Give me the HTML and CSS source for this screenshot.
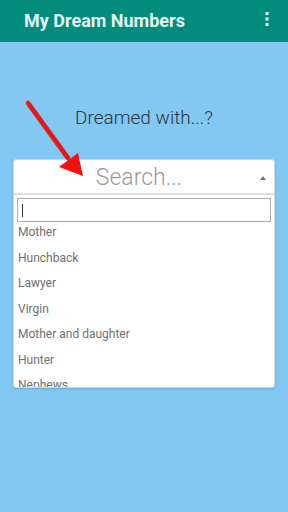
FILE: index.html
```html
<!DOCTYPE html>
<html lang="en">
<head>
<meta charset="UTF-8">
<meta name="viewport" content="width=device-width, initial-scale=1.0">
<title>My Dream Numbers</title>
<link rel="stylesheet" href="styles.css">
</head>
<body>
  <header class="app-bar">
    <span class="app-title">My Dream Numbers</span>
    <svg class="menu-icon" width="4" height="14" viewBox="0 0 4 14">
      <rect x="0.5" y="0" width="3" height="3" fill="#e6f7f4"/>
      <rect x="0.5" y="5.5" width="3" height="3" fill="#e6f7f4"/>
      <rect x="0.5" y="11" width="3" height="3" fill="#e6f7f4"/>
    </svg>
  </header>

  <main class="content">
    <h2 class="question">Dreamed with...?</h2>

    <div class="select">
      <div class="select-head">
        <span class="placeholder">Search...</span>
        <span class="caret"></span>
      </div>
      <div class="dropdown">
        <div class="search-box"><span class="cursor"></span></div>
        <ul class="options">
          <li>Mother</li>
          <li>Hunchback</li>
          <li>Lawyer</li>
          <li>Virgin</li>
          <li>Mother and daughter</li>
          <li>Hunter</li>
          <li>Nephews</li>
        </ul>
      </div>
    </div>
  </main>

  <!-- freccia rossa sopra il contenuto -->
  <svg class="arrow" width="100" height="100" viewBox="0 0 100 100">
    <g transform="translate(1,1.5)" opacity="0.25">
      <line x1="28" y1="103" x2="68" y2="158" stroke="#000" stroke-width="5" transform="translate(0,-95)"/>
    </g>
    <g transform="translate(0,-95)">
      <line x1="28" y1="103" x2="68" y2="158" stroke="#f21010" stroke-width="4.5" stroke-linecap="round"/>
      <polygon points="83,176 59,167 78,153" fill="#f21010"/>
    </g>
  </svg>
</body>
</html>
```

FILE: styles.css
```css
body {
  margin: 0;
  padding: 0;
  width: 288px;
  height: 512px;
  background-color: #82c8f3;
  font-family: Roboto, "Liberation Sans", sans-serif;
  position: relative;
  overflow: hidden;
}

.app-bar {
  height: 42px;
  background-color: #018c7e;
  display: flex;
  align-items: center;
  justify-content: space-between;
  padding: 0 19px 0 24px;
}

.app-title {
  color: #e3f7f3;
  font-size: 18px;
  font-weight: bold;
  margin-top: -2px;
}

.menu-icon {
  margin-top: -4px;
}

.content {
  padding: 0 13px;
}

.question {
  margin: 63px 0 0;
  text-align: center;
  font-size: 19px;
  font-weight: 300;
  color: #2b3640;
  line-height: 26px;
}

.select {
  margin-top: 28px;
  background: #fff;
  border: 1px solid #cfd6db;
  border-radius: 3px;
  box-shadow: 0 1px 2px rgba(0, 0, 0, 0.15);
}

.select-head {
  height: 33px;
  display: flex;
  align-items: center;
  justify-content: center;
  position: relative;
  border-bottom: 2px solid #dedede;
}

.placeholder {
  font-size: 23px;
  font-weight: 300;
  color: #9a9a9a;
  margin-left: -10px;
  margin-top: 2px;
}

.caret {
  position: absolute;
  right: 8px;
  top: 16px;
  width: 0;
  height: 0;
  border-left: 3px solid transparent;
  border-right: 3px solid transparent;
  border-bottom: 4px solid #777;
}

.dropdown {
  height: 189px;
  overflow: hidden;
  padding: 3px 3px 0;
}

.search-box {
  height: 22px;
  border: 1px solid #aaa;
  display: flex;
  align-items: center;
  padding-left: 4px;
}

.cursor {
  width: 1px;
  height: 13px;
  background: #333;
}

.options {
  list-style: none;
  margin: 0;
  padding: 0 0 0 1px;
}

.options li {
  height: 25.5px;
  line-height: 20px;
  font-size: 12px;
  color: #707070;
}

.arrow {
  position: absolute;
  left: 0;
  top: 95px;
}
```
